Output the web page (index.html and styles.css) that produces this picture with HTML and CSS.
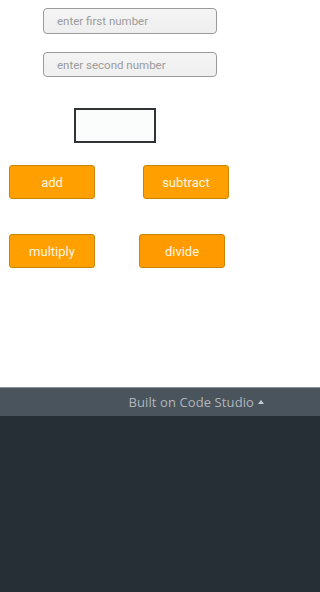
FILE: index.html
```html
<!DOCTYPE html>
<html>
<head>
<meta charset="utf-8">
<link rel="stylesheet" href="styles.css">
</head>
<body>
<div class="app">
  <input class="field field-first" type="text" placeholder="enter first number">
  <input class="field field-second" type="text" placeholder="enter second number">
  <div class="result"></div>
  <div class="row row-one">
    <button class="btn">add</button>
    <button class="btn btn-sub">subtract</button>
  </div>
  <div class="row row-two">
    <button class="btn">multiply</button>
    <button class="btn btn-div">divide</button>
  </div>
</div>
<div class="footer-bar">
  <span class="footer-text">Built on Code Studio</span>
  <span class="caret"></span>
</div>
<div class="footer-body"></div>
</body>
</html>
```
FILE: styles.css
```css
html {
  margin: 0;
  padding: 0;
  background: linear-gradient(#ffffff 0, #ffffff 387px, #8c9196 387px, #8c9196 388px, #4a545d 388px, #4a545d 416px, #262e36 416px);
}
body {
  margin: 0;
  padding: 0;
  width: 277px;
  height: 592px;
  overflow: hidden;
  font-family: Roboto, "Liberation Sans", sans-serif;
}
.app {
  background: #ffffff;
  height: 387px;
  display: flex;
  flex-direction: column;
  align-items: flex-start;
}
.field {
  box-sizing: border-box;
  width: 174px;
  margin-left: 43px;
  border: 1px solid #9a9a9a;
  border-radius: 4px;
  background: linear-gradient(#f4f4f4, #efefef);
  padding: 0 0 0 13px;
  font-family: Roboto, "Liberation Sans", sans-serif;
  font-size: 11.5px;
  color: #333;
  outline: none;
}
.field::placeholder {
  color: #9b9b9b;
}
.field-first {
  margin-top: 8px;
  height: 26px;
}
.field-second {
  margin-top: 18px;
  height: 25px;
}
.result {
  box-sizing: border-box;
  margin-top: 31px;
  margin-left: 74px;
  width: 82px;
  height: 35px;
  border: 2px solid #2f3336;
  background: #fbfdfd;
}
.row {
  display: flex;
  width: 100%;
}
.row-one {
  margin-top: 22px;
}
.row-two {
  margin-top: 35px;
}
.btn {
  box-sizing: border-box;
  width: 86px;
  height: 34px;
  margin-left: 9px;
  background: #ffa000;
  border: 1px solid #c98400;
  border-radius: 3px;
  color: #fdf6e0;
  font-family: Roboto, "Liberation Sans", sans-serif;
  font-size: 13px;
  padding: 0;
}
.btn-sub {
  margin-left: 48px;
}
.btn-div {
  margin-left: 44px;
  background: #ff9b00;
}
.footer-bar {
  box-sizing: border-box;
  height: 29px;
  background: #4a545d;
  border-top: 1px solid #8c9196;
  display: flex;
  align-items: center;
  justify-content: flex-end;
  padding-right: 13px;
  gap: 4px;
}
.footer-text {
  font-family: "Open Sans", "Liberation Sans", sans-serif;
  font-size: 13px;
  color: #b0b6bb;
  letter-spacing: 0.1px;
}
.caret {
  width: 0;
  height: 0;
  border-left: 3.5px solid transparent;
  border-right: 3.5px solid transparent;
  border-bottom: 4px solid #c9cdd1;
  margin-top: -1px;
}
.footer-body {
  height: 176px;
  background: #262e36;
}
```
